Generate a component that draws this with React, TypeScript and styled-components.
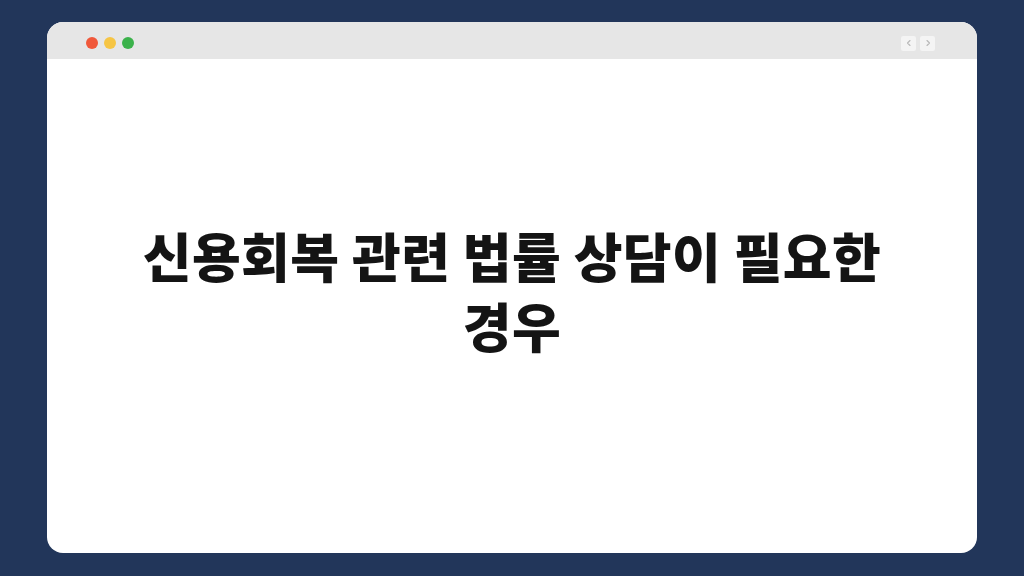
import React from "react";
import styled, { createGlobalStyle } from "styled-components";

const GlobalStyle = createGlobalStyle`
  html, body {
    margin: 0;
    padding: 0;
    background: #22365a;
  }
  * { box-sizing: border-box; }
`;

const Page = styled.div`
  width: 1024px;
  height: 576px;
  padding: 22px 47px 23px 47px;
  background: #22365a;
  display: flex;
`;

const Window = styled.div`
  flex: 1;
  display: flex;
  flex-direction: column;
  background: #ffffff;
  border-radius: 16px;
  overflow: hidden;
`;

const TitleBar = styled.div`
  height: 37px;
  background: #e6e6e6;
  display: flex;
  align-items: center;
  justify-content: space-between;
  padding: 5px 42px 0 39px;
`;

const Dots = styled.div`
  display: flex;
  gap: 6px;
`;

const Dot = styled.span<{ $color: string }>`
  width: 12px;
  height: 12px;
  border-radius: 50%;
  background: ${p => p.$color};
`;

const NavButtons = styled.div`
  display: flex;
  gap: 4px;
`;

const NavButton = styled.div`
  width: 15px;
  height: 15px;
  border-radius: 2px;
  background: #f4f4f4;
  color: #b8b8b8;
  display: flex;
  align-items: center;
  justify-content: center;
`;

const Content = styled.div`
  flex: 1;
  display: flex;
  align-items: center;
  justify-content: center;
  padding: 0 70px 32px;
`;

const Title = styled.h1`
  margin: 0;
  font-family: "Noto Sans CJK KR", "Noto Sans", sans-serif;
  font-weight: 800;
  font-size: 53px;
  line-height: 70px;
  letter-spacing: 0.4px;
  color: #141414;
  text-align: center;
`;

const Chevron = ({ dir }: { dir: "left" | "right" }) => (
  <svg width="8" height="8" viewBox="0 0 8 8" fill="none">
    <path
      d={dir === "left" ? "M5 1.5 L2.5 4 L5 6.5" : "M3 1.5 L5.5 4 L3 6.5"}
      stroke="currentColor"
      strokeWidth="1.1"
      strokeLinecap="round"
      strokeLinejoin="round"
    />
  </svg>
);

export default function App() {
  return (
    <>
      <GlobalStyle />
      <Page>
        <Window>
          <TitleBar>
            <Dots>
              <Dot $color="#f0583a" />
              <Dot $color="#f6c544" />
              <Dot $color="#3bb24b" />
            </Dots>
            <NavButtons>
              <NavButton><Chevron dir="left" /></NavButton>
              <NavButton><Chevron dir="right" /></NavButton>
            </NavButtons>
          </TitleBar>
          <Content>
            <Title>신용회복 관련 법률 상담이 필요한 경우</Title>
          </Content>
        </Window>
      </Page>
    </>
  );
}
